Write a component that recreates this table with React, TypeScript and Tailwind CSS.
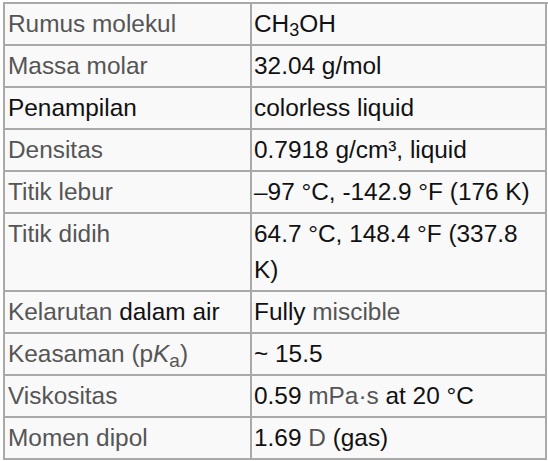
import React from "react";

const G = ({ children }: { children: React.ReactNode }) => (
  <span className="text-[#555555]">{children}</span>
);

type Row = { label: React.ReactNode; value: React.ReactNode };

const rows: Row[] = [
  {
    label: <G>Rumus molekul</G>,
    value: (
      <>
        CH<sub className="text-[18px] relative top-[4px] align-baseline">3</sub>OH
      </>
    ),
  },
  { label: <G>Massa molar</G>, value: "32.04 g/mol" },
  { label: "Penampilan", value: "colorless liquid" },
  { label: <G>Densitas</G>, value: "0.7918 g/cm³, liquid" },
  { label: <G>Titik lebur</G>, value: "–97 °C, -142.9 °F (176 K)" },
  { label: <G>Titik didih</G>, value: "64.7 °C, 148.4 °F (337.8 K)" },
  {
    label: (
      <>
        <G>Kelarutan</G> dalam air
      </>
    ),
    value: (
      <>
        Fully <G>miscible</G>
      </>
    ),
  },
  {
    label: (
      <G>
        Keasaman (p<i>K</i>
        <sub className="text-[19px] relative top-[5px] align-baseline">a</sub>)
      </G>
    ),
    value: "~ 15.5",
  },
  { label: <G>Viskositas</G>, value: (<>0.59 <G>mPa·s</G> at 20 °C</>) },
  { label: <G>Momen dipol</G>, value: (<>1.69 <G>D</G> (gas)</>) },
];

export default function App() {
  return (
    <div className="w-[548px] h-[461px] bg-white pt-[2px] pl-[3px]">
      <div
        className="grid grid-cols-[247px_295px] border-t-2 border-l-2 border-[#a9a9a9] text-[24.4px] leading-[36px] text-[#111111]"
        style={{ fontFamily: '"Liberation Sans", Arial, sans-serif' }}
      >
        {rows.map((r, i) => (
          <React.Fragment key={i}>
            <div className="bg-[#f9f9f9] border-r-2 border-b-2 border-[#a9a9a9] pl-[3px] py-[2px] whitespace-nowrap">
              {r.label}
            </div>
            <div className="bg-[#f9f9f9] border-r-2 border-b-2 border-[#a9a9a9] pl-[2px] pr-[2px] py-[2px]">
              {r.value}
            </div>
          </React.Fragment>
        ))}
      </div>
    </div>
  );
}
